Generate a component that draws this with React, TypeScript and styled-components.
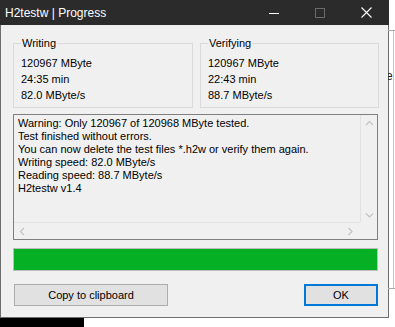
import React from "react";
import styled, { createGlobalStyle } from "styled-components";

const GlobalStyle = createGlobalStyle`
  html, body { margin: 0; padding: 0; background: #ffffff; }
  body { font-family: "Liberation Sans", Arial, sans-serif; }
  * { box-sizing: border-box; }
`;

const Screen = styled.div`
  width: 395px;
  height: 327px;
  display: flex;
  overflow: hidden;
  background: #ffffff;
`;

const WindowColumn = styled.div`
  display: flex;
  flex-direction: column;
  width: 389px;
  flex: none;
`;

const Window = styled.div`
  width: 389px;
  height: 318px;
  display: flex;
  flex-direction: column;
  border-left: 1px solid #6d6d6d;
  border-right: 1px solid #6d6d6d;
  border-bottom: 1px solid #6d6d6d;
  background: #f0f0f0;
`;

const TitleBar = styled.div`
  height: 25px;
  flex: none;
  display: flex;
  align-items: center;
  background: #2b2b2b;
  margin: 0 -1px;
`;

const Title = styled.div`
  flex: 1;
  padding-left: 5px;
  color: #ffffff;
  font-family: "Liberation Sans", Arial, sans-serif;
  font-size: 12px;
  white-space: nowrap;
`;

const CaptionButton = styled.div`
  width: 46px;
  height: 25px;
  display: flex;
  align-items: center;
  justify-content: center;
`;

const Body = styled.div`
  flex: 1;
  display: flex;
  flex-direction: column;
  padding: 12px 10px 0 12px;
  font-size: 11px;
  color: #000000;
`;

const GroupRow = styled.div`
  display: grid;
  grid-template-columns: 180px 179px;
  column-gap: 7px;
`;

const GroupBox = styled.fieldset`
  margin: 0;
  min-width: 0;
  padding: 5px 7px 4px 7px;
  border: 1px solid #dadada;
`;

const Legend = styled.legend`
  padding: 0 1px;
  line-height: 13px;
  font-size: 11px;
`;

const Value = styled.div`
  line-height: 16px;
  white-space: nowrap;
`;

const LogBox = styled.div`
  margin-top: 6px;
  height: 126px;
  border: 1px solid #7f7f7f;
  display: grid;
  grid-template-columns: 1fr 17px;
  grid-template-rows: 1fr 17px;
  background: #f0f0f0;
`;

const LogText = styled.div`
  padding: 2px 4px;
  line-height: 13px;
  white-space: nowrap;
  overflow: hidden;
`;

const VScroll = styled.div`
  border-left: 1px solid #e2e2e2;
  display: flex;
  flex-direction: column;
  justify-content: space-between;
  align-items: center;
  padding: 5px 0 3px;
`;

const HScroll = styled.div`
  border-top: 1px solid #e2e2e2;
  display: flex;
  justify-content: space-between;
  align-items: center;
  padding: 0 6px 0 5px;
`;

const Corner = styled.div`
  background: #f0f0f0;
`;

const Progress = styled.div`
  margin-top: 8px;
  height: 23px;
  border: 1px solid #bcbcbc;
  background: #e6e6e6;
  display: flex;
`;

const ProgressFill = styled.div`
  background: #06b025;
  height: 100%;
`;

const ButtonRow = styled.div`
  margin-top: 13px;
  display: flex;
  justify-content: space-between;
  padding-left: 1px;
`;

const Button = styled.button<{ $default?: boolean; $width: number }>`
  width: ${(p) => p.$width}px;
  height: 22px;
  margin: 0;
  padding: 0;
  font-family: "Liberation Sans", Arial, sans-serif;
  font-size: 11px;
  color: #000000;
  background: #e1e1e1;
  border: ${(p) => (p.$default ? "2px solid #0078d7" : "1px solid #adadad")};
`;

const SideStrip = styled.div`
  flex: 1;
  padding-top: 30px;
  display: flex;
  flex-direction: column;
`;

const BehindWindow = styled.div`
  height: 259px;
  border-top: 1px solid #a9a9a9;
  border-bottom: 1px solid #a9a9a9;
  overflow: hidden;
  font-size: 12px;
  color: #222;
  padding-top: 38px;
  margin-left: -1px;
  display: flex;
`;

const BehindText = styled.span`
  line-height: 14px;
  margin-left: -2px;
`;

const BehindLine = styled.div`
  width: 1px;
  background: #c4c4c4;
  margin-top: -38px;
`;

const Taskbar = styled.div`
  width: 84px;
  height: 9px;
  background: #000000;
`;

const Chevron = ({ dir }: { dir: "up" | "down" | "left" | "right" }) => {
  const paths: Record<string, string> = {
    up: "M1 5 L4.5 1.5 L8 5",
    down: "M1 1.5 L4.5 5 L8 1.5",
    left: "M5 1 L1.5 4.5 L5 8",
    right: "M1.5 1 L5 4.5 L1.5 8",
  };
  const horiz = dir === "left" || dir === "right";
  return (
    <svg width={horiz ? 7 : 9} height={horiz ? 9 : 7} viewBox={horiz ? "0 0 7 9" : "0 0 9 7"}>
      <path d={paths[dir]} fill="none" stroke="#c3c3c3" strokeWidth="1.2" />
    </svg>
  );
};

export default function App() {
  const lines = [
    "Warning: Only 120967 of 120968 MByte tested.",
    "Test finished without errors.",
    "You can now delete the test files *.h2w or verify them again.",
    "Writing speed: 82.0 MByte/s",
    "Reading speed: 88.7 MByte/s",
    "H2testw v1.4",
  ];
  return (
    <>
      <GlobalStyle />
      <Screen>
        <WindowColumn>
          <Window>
            <TitleBar>
              <Title>H2testw | Progress</Title>
              <CaptionButton>
                <svg width="10" height="10" viewBox="0 0 10 10">
                  <path d="M0 5.5 H10" stroke="#ffffff" strokeWidth="1" />
                </svg>
              </CaptionButton>
              <CaptionButton>
                <svg width="10" height="10" viewBox="0 0 10 10">
                  <rect x="0.5" y="0.5" width="9" height="9" fill="none" stroke="#6a6a6a" strokeWidth="1" />
                </svg>
              </CaptionButton>
              <CaptionButton>
                <svg width="11" height="11" viewBox="0 0 11 11">
                  <path d="M0.5 0.5 L10.5 10.5 M10.5 0.5 L0.5 10.5" stroke="#ffffff" strokeWidth="1.1" />
                </svg>
              </CaptionButton>
            </TitleBar>
            <Body>
              <GroupRow>
                <GroupBox>
                  <Legend>Writing</Legend>
                  <Value>120967 MByte</Value>
                  <Value>24:35 min</Value>
                  <Value>82.0 MByte/s</Value>
                </GroupBox>
                <GroupBox>
                  <Legend>Verifying</Legend>
                  <Value>120967 MByte</Value>
                  <Value>22:43 min</Value>
                  <Value>88.7 MByte/s</Value>
                </GroupBox>
              </GroupRow>
              <LogBox>
                <LogText>
                  {lines.map((l) => (
                    <div key={l}>{l}</div>
                  ))}
                </LogText>
                <VScroll>
                  <Chevron dir="up" />
                  <Chevron dir="down" />
                </VScroll>
                <HScroll>
                  <Chevron dir="left" />
                  <Chevron dir="right" />
                </HScroll>
                <Corner />
              </LogBox>
              <Progress>
                <ProgressFill style={{ width: "100%" }} />
              </Progress>
              <ButtonRow>
                <Button $width={154}>Copy to clipboard</Button>
                <Button $width={74} $default>
                  OK
                </Button>
              </ButtonRow>
            </Body>
          </Window>
          <Taskbar />
        </WindowColumn>
        <SideStrip>
          <BehindWindow>
            <BehindText>e</BehindText>
            <BehindLine />
          </BehindWindow>
        </SideStrip>
      </Screen>
    </>
  );
}
